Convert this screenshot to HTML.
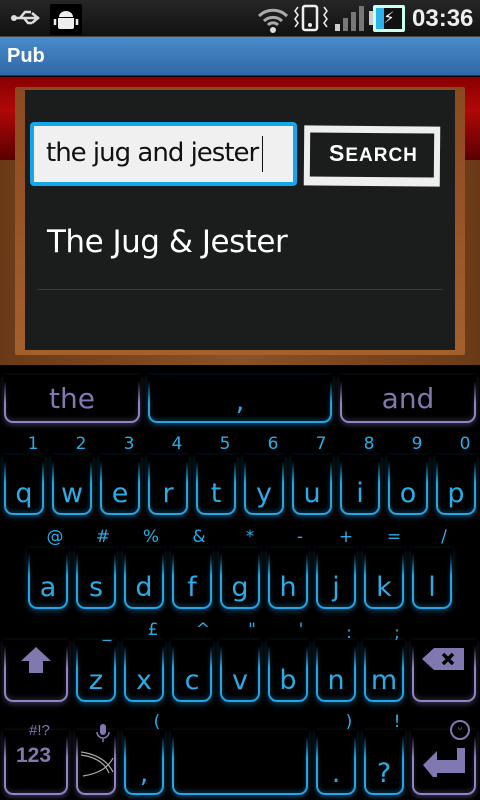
<!DOCTYPE html><html><head><style>
*{margin:0;padding:0;box-sizing:border-box}
body{width:480px;height:800px;overflow:hidden;background:#000;font-family:"Liberation Sans","DejaVu Sans",sans-serif;position:relative}
.a{position:absolute}
.k{position:absolute;border:2px solid #22a6e6;border-top:none;border-radius:0 0 9px 9px;box-shadow:0 2px 6px rgba(30,150,220,.45),inset 0 -2px 5px rgba(30,150,220,.3);color:#27aee8;text-align:center;font-family:"DejaVu Sans",sans-serif;font-size:27px}
.k:before{content:"";position:absolute;left:-3px;right:-3px;top:0;height:28px;background:linear-gradient(#000 20%,rgba(0,0,0,0))}
.p{border-color:#8e86c4;color:#8079b0;box-shadow:0 2px 6px rgba(140,130,200,.4),inset 0 -2px 5px rgba(140,130,200,.25)}
.k span{position:absolute;left:0;right:0;bottom:4px}
.h{position:absolute;color:#27aee8;font-family:"DejaVu Sans",sans-serif;font-size:17px;width:24px;text-align:center}
</style></head><body>
<div class="a" style="left:0;top:0;width:480px;height:37px;background:linear-gradient(#262626,#111);border-bottom:1px solid #444"></div>
<svg class="a" style="left:10px;top:6px" width="36" height="24"><path d="M3 12h26M22 7l6 5-6 5M10 12l5-6h6M14 12l4 5h4" stroke="#ddd" stroke-width="2.5" fill="none"/><circle cx="4" cy="12" r="3" fill="#ddd"/></svg>
<div class="a" style="left:50px;top:4px;width:32px;height:31px;background:#000;border-radius:2px"></div>
<svg class="a" style="left:53px;top:6px" width="26" height="26"><path d="M6 11a7 6 0 0 1 14 0z M5 12h16v9a2 2 0 0 1-2 2H7a2 2 0 0 1-2-2z" fill="#eee"/><path d="M2 13v6M24 13v6M13 12v11" stroke="#eee" stroke-width="2.5"/></svg>
<svg class="a" style="left:256px;top:5px" width="34" height="28"><path d="M3 11a20 20 0 0 1 28 0M8 16a13 13 0 0 1 18 0M12 20a7 7 0 0 1 10 0" stroke="#aaa" stroke-width="3" fill="none"/><circle cx="17" cy="25" r="3" fill="#ddd"/></svg>
<svg class="a" style="left:293px;top:4px" width="36" height="28"><rect x="10" y="2" width="14" height="24" rx="2" fill="none" stroke="#eee" stroke-width="2.5"/><circle cx="17" cy="21" r="2" fill="#eee"/><path d="M5 3l-3 4 3 4-3 4 3 4-3 4M31 3l3 4-3 4 3 4-3 4 3 4" stroke="#eee" stroke-width="1.5" fill="none"/></svg>
<div class="a" style="left:335px;top:24px;width:5px;height:7px;background:#ccc"></div>
<div class="a" style="left:343px;top:18px;width:5px;height:13px;background:#777"></div>
<div class="a" style="left:351px;top:12px;width:5px;height:19px;background:#777"></div>
<div class="a" style="left:359px;top:6px;width:5px;height:25px;background:#777"></div>
<div class="a" style="left:369px;top:11px;width:4px;height:14px;background:#ccc"></div>
<div class="a" style="left:373px;top:5px;width:32px;height:27px;border:3px solid #cfe;background:linear-gradient(90deg,#2bb3ee 30%,#111 30%);border-radius:2px;color:#fff;font-size:16px;text-align:center;line-height:21px">⚡</div>
<div class="a" style="left:412px;top:5px;color:#eee;font-weight:bold;font-size:24px">03:36</div>
<div class="a" style="left:0;top:37px;width:480px;height:39px;background:linear-gradient(#4a8ccc,#2f68a6);border-bottom:1px solid #1a3a60"></div>
<div class="a" style="left:7px;top:45px;color:#fff;font-weight:bold;font-size:20px">Pub</div>
<div class="a" style="left:0;top:77px;width:480px;height:83px;background:linear-gradient(#8a0000,#b00808 40%,#5a0000)"></div>
<div class="a" style="left:0;top:160px;width:480px;height:205px;background:linear-gradient(90deg,#6a3a18,#8a5226,#6a3a18)"></div>
<div class="a" style="left:15px;top:87px;width:450px;height:268px;background:linear-gradient(#8a4a20,#a4602c);border-radius:2px"></div>
<div class="a" style="left:25px;top:90px;width:430px;height:260px;background:#1a1d1b"></div>
<div class="a" style="left:30px;top:122px;width:267px;height:64px;border:4px solid #12a6ee;border-radius:4px;background:#f0f0f0"></div>
<div class="a" style="left:46px;top:138px;font-family:'DejaVu Sans',sans-serif;font-size:26px;color:#111;letter-spacing:-1px">the jug and jester</div>
<div class="a" style="left:262px;top:136px;width:1px;height:36px;background:#111"></div>
<div class="a" style="left:304px;top:126px;width:136px;height:60px;border:6px solid #eee;border-top-width:7px;border-bottom-width:9px;transform:rotate(0.5deg)"></div>
<div class="a" style="left:329px;top:140px;color:#fff;font-weight:bold;font-size:23px;letter-spacing:1px">S<span style="font-size:19px">EARCH</span></div>
<div class="a" style="left:47px;top:224px;font-family:'DejaVu Sans',sans-serif;font-size:31px;color:#fff;letter-spacing:-0.5px">The Jug &amp; Jester</div>
<div class="a" style="left:38px;top:289px;width:404px;height:1px;background:#3a3d3b"></div>
<div class="a" style="left:0;top:365px;width:480px;height:435px;background:#000"></div>
<div class="k p" style="left:4px;top:375px;width:136px;height:48px;font-size:28px"><span style="bottom:6px">the</span></div>
<div class="k" style="left:148px;top:375px;width:184px;height:48px"><span style="bottom:4px">,</span></div>
<div class="k p" style="left:340px;top:375px;width:136px;height:48px;font-size:28px"><span style="bottom:6px">and</span></div>

<div class="k" style="left:4px;top:455px;width:40px;height:60px"><span>q</span></div>
<div class="k" style="left:52px;top:455px;width:40px;height:60px"><span>w</span></div>
<div class="k" style="left:100px;top:455px;width:40px;height:60px"><span>e</span></div>
<div class="k" style="left:148px;top:455px;width:40px;height:60px"><span>r</span></div>
<div class="k" style="left:196px;top:455px;width:40px;height:60px"><span>t</span></div>
<div class="k" style="left:244px;top:455px;width:40px;height:60px"><span>y</span></div>
<div class="k" style="left:292px;top:455px;width:40px;height:60px"><span>u</span></div>
<div class="k" style="left:340px;top:455px;width:40px;height:60px"><span>i</span></div>
<div class="k" style="left:388px;top:455px;width:40px;height:60px"><span>o</span></div>
<div class="k" style="left:436px;top:455px;width:40px;height:60px"><span>p</span></div>
<div class="h" style="left:21px;top:434px">1</div><div class="h" style="left:69px;top:434px">2</div><div class="h" style="left:117px;top:434px">3</div><div class="h" style="left:165px;top:434px">4</div><div class="h" style="left:213px;top:434px">5</div><div class="h" style="left:261px;top:434px">6</div><div class="h" style="left:309px;top:434px">7</div><div class="h" style="left:357px;top:434px">8</div><div class="h" style="left:405px;top:434px">9</div><div class="h" style="left:453px;top:434px">0</div>

<div class="k" style="left:28px;top:548px;width:40px;height:61px"><span>a</span></div>
<div class="k" style="left:76px;top:548px;width:40px;height:61px"><span>s</span></div>
<div class="k" style="left:124px;top:548px;width:40px;height:61px"><span>d</span></div>
<div class="k" style="left:172px;top:548px;width:40px;height:61px"><span>f</span></div>
<div class="k" style="left:220px;top:548px;width:40px;height:61px"><span>g</span></div>
<div class="k" style="left:268px;top:548px;width:40px;height:61px"><span>h</span></div>
<div class="k" style="left:316px;top:548px;width:40px;height:61px"><span>j</span></div>
<div class="k" style="left:364px;top:548px;width:40px;height:61px"><span>k</span></div>
<div class="k" style="left:412px;top:548px;width:40px;height:61px"><span>l</span></div>
<div class="h" style="left:43px;top:527px">@</div><div class="h" style="left:91px;top:527px">#</div><div class="h" style="left:139px;top:527px">%</div><div class="h" style="left:187px;top:527px">&amp;</div><div class="h" style="left:238px;top:527px">*</div><div class="h" style="left:288px;top:527px">-</div><div class="h" style="left:334px;top:527px">+</div><div class="h" style="left:382px;top:527px">=</div><div class="h" style="left:432px;top:527px">/</div>

<div class="k p" style="left:4px;top:640px;width:64px;height:62px"></div>
<svg class="a" style="left:19px;top:645px" width="34" height="30"><path d="M17 2L2 16h8v12h14V16h8z" fill="#8079b0"/></svg>
<div class="k" style="left:76px;top:640px;width:40px;height:62px"><span>z</span></div>
<div class="k" style="left:124px;top:640px;width:40px;height:62px"><span>x</span></div>
<div class="k" style="left:172px;top:640px;width:40px;height:62px"><span>c</span></div>
<div class="k" style="left:220px;top:640px;width:40px;height:62px"><span>v</span></div>
<div class="k" style="left:268px;top:640px;width:40px;height:62px"><span>b</span></div>
<div class="k" style="left:316px;top:640px;width:40px;height:62px"><span>n</span></div>
<div class="k" style="left:364px;top:640px;width:40px;height:62px"><span>m</span></div>
<div class="k p" style="left:412px;top:640px;width:64px;height:62px"></div>
<svg class="a" style="left:422px;top:648px" width="42" height="22"><path d="M0 11L12 0h30v22H12z" fill="#8079b0"/><path d="M21 6l10 10M31 6L21 16" stroke="#000" stroke-width="3.5"/></svg>
<div class="h" style="left:95px;top:622px">_</div><div class="h" style="left:141px;top:620px">£</div><div class="h" style="left:191px;top:620px">^</div><div class="h" style="left:240px;top:620px">"</div><div class="h" style="left:289px;top:620px">'</div><div class="h" style="left:337px;top:623px">:</div><div class="h" style="left:385px;top:623px">;</div>

<div class="k p" style="left:4px;top:730px;width:64px;height:65px"></div>
<div class="a" style="left:29px;top:722px;color:#8079b0;font-size:15px">#!?</div>
<div class="a" style="left:16px;top:744px;color:#8079b0;font-size:21px;font-weight:bold">123</div>
<div class="k p" style="left:76px;top:730px;width:40px;height:65px"></div>
<svg class="a" style="left:78px;top:722px" width="38" height="66"><rect x="22" y="2" width="6" height="11" rx="3" fill="#8079b0"/><path d="M19 10a6 6 0 0 0 12 0M25 16v4" stroke="#8079b0" stroke-width="1.5" fill="none"/><path d="M3 30c14 2 26 8 32 20M5 54c12-2 24-6 30-18M3 33c14 2 24 8 28 18" stroke="#aaa" stroke-width="1.2" fill="none"/></svg>
<div class="k" style="left:124px;top:730px;width:40px;height:65px"><span>,</span></div>
<div class="k" style="left:172px;top:730px;width:136px;height:65px"></div>
<div class="k" style="left:316px;top:730px;width:40px;height:65px"><span>.</span></div>
<div class="k" style="left:364px;top:730px;width:40px;height:65px"><span>?</span></div>
<div class="k p" style="left:412px;top:730px;width:64px;height:65px"></div>
<svg class="a" style="left:423px;top:747px" width="44" height="30"><path d="M0 18L14 4v9h20V1h8v25H14v9z" fill="#8079b0"/></svg>
<div class="a" style="left:450px;top:720px;width:20px;height:20px;border:2px solid #8079b0;border-radius:50%;color:#8079b0;font-size:11px;text-align:center;line-height:15px">ᵕ</div>
<div class="h" style="left:145px;top:712px">(</div><div class="h" style="left:337px;top:712px">)</div><div class="h" style="left:385px;top:712px">!</div>
</body></html>
